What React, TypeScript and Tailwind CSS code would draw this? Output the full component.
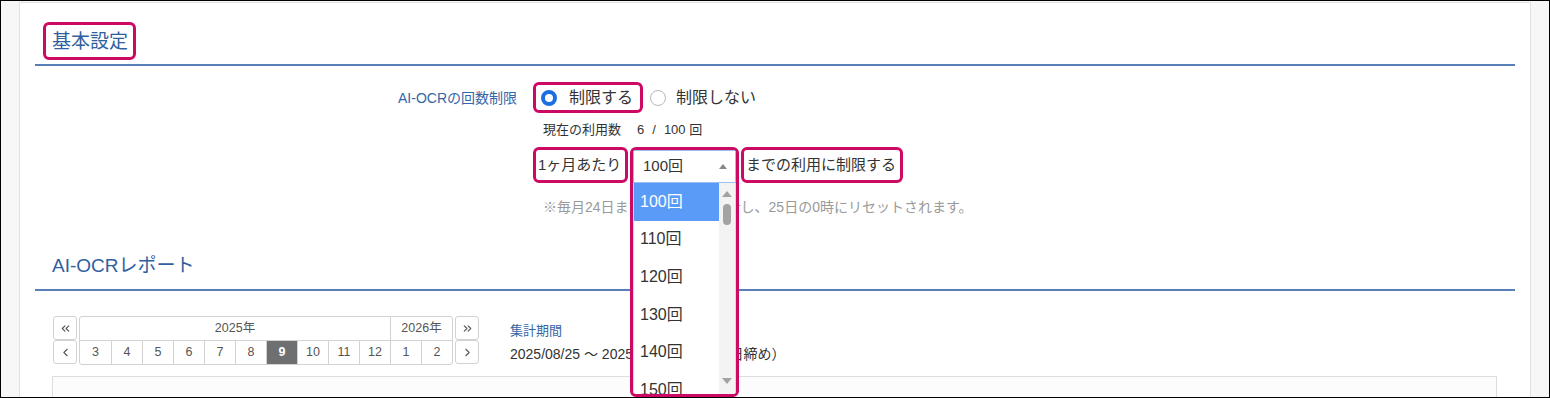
import React from 'react';
import { ChevronLeft, ChevronRight, ChevronsLeft, ChevronsRight } from 'lucide-react';

const MONTHS = [3, 4, 5, 6, 7, 8, 9, 10, 11, 12, 1, 2];
const OPTIONS = ['100回', '110回', '120回', '130回', '140回', '150回'];

function Radio({ checked }: { checked: boolean }) {
  return checked ? (
    <span className="w-4 h-4 rounded-full border-[4px] border-[#1b6fe3] bg-white shrink-0" />
  ) : (
    <span className="w-4 h-4 rounded-full border border-[#b8b8b8] bg-white shrink-0" />
  );
}

function CalBtn({ children }: { children: React.ReactNode }) {
  return (
    <div className="w-6 h-6 border border-[#d2d2d2] rounded-[3px] flex items-center justify-center text-[#555] bg-white">
      {children}
    </div>
  );
}

export default function App() {
  return (
    <div className="w-[1550px] h-[398px] overflow-hidden border border-black bg-[#f7f7f7] pl-[18px] pt-px font-['Liberation_Sans','Noto_Sans_CJK_JP',sans-serif] text-[#333]">
      <div className="w-[1512px] h-[420px] bg-white border border-[#e2e2e2] px-[15px] pt-[19px]">
        {/* 基本設定 */}
        <div className="ml-2 w-fit h-[38px] border-[3px] border-[#cc0a64] rounded-md pl-[6px] pr-[5px] flex items-center">
          <span className="text-[19px] leading-none text-[#2f609f]">基本設定</span>
        </div>
        <div className="mt-1 h-[2px] bg-[#5a7fb6]" />

        <div className="flex mt-4">
          <div className="w-[482px] text-right pt-[7px] text-[14px] leading-[18px] text-[#3466a6]">AI-OCRの回数制限</div>
          <div className="ml-4 flex flex-col">
            {/* radios */}
            <div className="flex items-center h-[31px]">
              <div className="h-[31px] border-[3px] border-[#cc0a64] rounded-md flex items-center pl-[5px] pr-[7px]">
                <Radio checked />
                <span className="ml-3 text-[16px] leading-none text-[#333]">制限する</span>
              </div>
              <div className="flex items-center ml-[7px]">
                <Radio checked={false} />
                <span className="ml-[10px] text-[16px] leading-none text-[#333]">制限しない</span>
              </div>
            </div>

            <div className="mt-[7px] h-5 flex items-center pl-[10px] text-[13px] text-[#333]">
              <span>現在の利用数</span>
              <span className="ml-4">6</span>
              <span className="ml-2">/</span>
              <span className="ml-2">100 回</span>
            </div>

            {/* limit row */}
            <div className="mt-[7px] flex items-start gap-[2px] h-9">
              <div className="h-9 w-[95px] border-[3px] border-[#cc0a64] rounded-md flex items-center pl-[2px] text-[15px] text-[#333]">
                1ヶ月あたり
              </div>
              <div className="relative w-[109px] h-9">
                <div className="absolute left-0 top-0 w-[109px] h-[250px] border-[3px] border-[#cc0a64] rounded-md bg-white z-10 flex flex-col overflow-hidden">
                  <div className="h-[33px] border border-[#9cc0f2] flex items-center pl-[9px] pr-[8px] text-[15px] text-[#333] shrink-0">
                    <span>100回</span>
                    <span className="ml-auto w-0 h-0 border-l-[4px] border-r-[4px] border-b-[5px] border-l-transparent border-r-transparent border-b-[#888]" />
                  </div>
                  <div className="flex flex-1 min-h-0 overflow-hidden border-x border-[#d8d8d8]">
                    <div className="flex-1 flex flex-col">
                      {OPTIONS.map((o, i) => (
                        <div
                          key={o}
                          className={
                            i === 0
                              ? 'h-[37.6px] shrink-0 flex items-center pl-[6px] text-[16px] bg-[#5b9bf8] text-white'
                              : 'h-[37.6px] shrink-0 flex items-center pl-[6px] text-[16px] text-[#333]'
                          }
                        >
                          {o}
                        </div>
                      ))}
                    </div>
                    <div className="w-4 bg-[#f3f3f3] flex flex-col items-center pt-[8px] pb-[10px]">
                      <span className="w-0 h-0 border-l-[5px] border-r-[5px] border-b-[6px] border-l-transparent border-r-transparent border-b-[#a3a3a3]" />
                      <span className="mt-[7px] w-[8px] h-[21px] rounded-full bg-[#a3a3a3]" />
                      <span className="mt-auto w-0 h-0 border-l-[5px] border-r-[5px] border-t-[6px] border-l-transparent border-r-transparent border-t-[#a3a3a3]" />
                    </div>
                  </div>
                </div>
              </div>
              <div className="h-9 border-[3px] border-[#cc0a64] rounded-md flex items-center pl-[2px] pr-[4px] text-[15px] text-[#333]">
                までの利用に制限する
              </div>
            </div>

            <div className="mt-[14px] h-5 flex items-center pl-[10px] text-[14px] text-[#9a9a9a]">
              ※毎月24日までの利用数を集計し、25日の0時にリセットされます。
            </div>
          </div>
        </div>

        {/* AI-OCRレポート */}
        <div className="mt-9 pl-[17px] h-6 flex items-center text-[19px] leading-none text-[#2f609f]">AI-OCRレポート</div>
        <div className="mt-3 h-[2px] bg-[#5a7fb6]" />

        <div className="mt-[25px] flex items-start">
          <div className="ml-[18px] flex gap-[1px]">
            <div className="flex flex-col">
              <CalBtn><ChevronsLeft size={13} strokeWidth={2} /></CalBtn>
              <CalBtn><ChevronLeft size={13} strokeWidth={2} /></CalBtn>
            </div>
            <div className="w-[374px] ml-px border border-[#d2d2d2] rounded-[3px] overflow-hidden grid grid-cols-12 text-[12.5px] text-[#555] bg-white">
              <div className="col-span-10 h-[23px] flex items-center justify-center">2025年</div>
              <div className="col-span-2 h-[23px] flex items-center justify-center border-l border-[#d2d2d2]">2026年</div>
              {MONTHS.map((m, i) => (
                <div
                  key={i}
                  className={
                    m === 9
                      ? 'h-6 flex items-center justify-center border-t border-l border-[#d2d2d2] bg-[#6d6f71] text-white font-bold'
                      : i === 0
                        ? 'h-6 flex items-center justify-center border-t border-[#d2d2d2]'
                        : 'h-6 flex items-center justify-center border-t border-l border-[#d2d2d2]'
                  }
                >
                  {m}
                </div>
              ))}
            </div>
            <div className="flex flex-col ml-px">
              <CalBtn><ChevronsRight size={13} strokeWidth={2} /></CalBtn>
              <CalBtn><ChevronRight size={13} strokeWidth={2} /></CalBtn>
            </div>
          </div>
          <div className="ml-[31px] pt-[6px]">
            <div className="text-[13px] leading-[18px] text-[#3466a6]">集計期間</div>
            <div className="mt-[4px] text-[14px] leading-[20px] text-[#333]">2025/08/25 ～ 2025/09/24（毎月25日締め）</div>
          </div>
        </div>

        <div className="mt-[11px] ml-[17px] w-[1445px] h-[40px] border border-[#dedede] bg-[#fcfcfc]" />
      </div>
    </div>
  );
}
